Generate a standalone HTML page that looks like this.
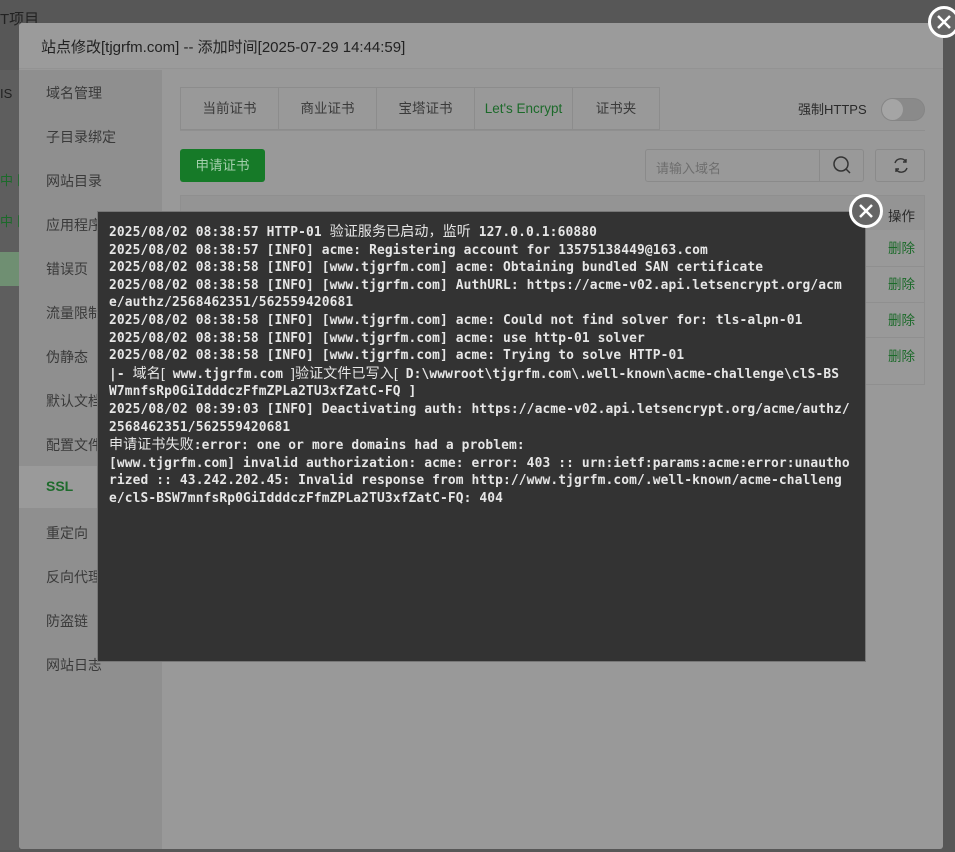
<!DOCTYPE html>
<html><head><meta charset="utf-8"><style>
*{margin:0;padding:0;box-sizing:border-box}
body{width:955px;height:852px;overflow:hidden;background:#575757;font-family:"Liberation Sans","Noto Sans CJK SC",sans-serif;position:relative}
.bgt{position:absolute;left:0;top:8px;font-size:15px;color:#222}
.bgstrip{position:absolute;left:0;top:70px;width:19px;height:780px;background:#5e5e5e}
.bgl{position:absolute;left:0;font-size:13px}
.modal{position:absolute;left:19px;top:23px;width:924px;height:826px;background:#999;border-radius:3px;overflow:hidden}
.head{height:46px;background:#9b9b9b;border-bottom:1px solid #939393;font-size:15px;color:#222;padding:13px 22px}
.side{position:absolute;left:0;top:47px;width:143px;bottom:0;background:#8f8f8f}
.side div{position:absolute;left:27px;font-size:14px;color:#3a3a3a}
.ssl{left:0!important;width:143px;height:42px;background:#9a9a9a;color:#1e6b2c!important;padding:12px 27px;font-weight:bold}
.tabs{position:absolute;left:161px;top:64px;height:43px;border:1px solid #8c8c8c;display:flex;background:#999}
.tabs div{width:98px;text-align:center;line-height:41px;font-size:13.5px;color:#3a3a3a;border-right:1px solid #8c8c8c}
.tabs div:last-child{width:86px;border-right:none}
.btn{position:absolute;left:161px;top:126px;width:85px;height:33px;background:#167a28;border-radius:3px;color:#a5cfad;font-size:13.5px;text-align:center;line-height:33px}
.search{position:absolute;left:626px;top:126px;width:219px;height:33px;border:1px solid #8a8a8a;border-radius:3px;font-size:13px;color:#6e6e6e;padding:8px 10px}
.search i{position:absolute;right:0;top:0;width:44px;height:31px;border-left:1px solid #8a8a8a}
.refresh{position:absolute;left:856px;top:126px;width:50px;height:33px;border:1px solid #8a8a8a;border-radius:3px}
.tbl{position:absolute;left:161px;top:172px;width:745px;height:190px;border:1px solid #8f8f8f;background:#999}
.tbl .th{height:34px;background:#949494}
.op{position:absolute;font-size:13.5px;color:#1c6a2a}
.console{position:absolute;left:97px;top:211px;width:769px;height:451px;background:#333;border:1px solid #777;padding:11px 0 0 11px;font-family:"DejaVu Sans Mono","Noto Sans CJK SC",monospace;font-size:12.9px;letter-spacing:0.12px;font-weight:bold;color:#e6e6e6;white-space:pre;line-height:17.6px}
.console b{font-family:"Liberation Sans","Noto Sans CJK SC",sans-serif;font-weight:normal;font-size:14px}
.x{position:absolute;border-radius:50%;background:#666;border:3px solid #fff}
</style></head><body>
<div class="bgt">T项目</div>
<div class="bgstrip"></div>
<div class="bgl" style="top:86px;color:#222">IS</div>
<div class="bgl" style="top:170px;color:#1c6a2a">中 ▶</div>
<div class="bgl" style="top:211px;color:#1c6a2a">中 ▶</div>
<div style="position:absolute;left:0;top:252px;width:19px;height:34px;background:#6f8f72"></div>
<div class="modal">
<div class="head">站点修改[tjgrfm.com] -- 添加时间[2025-07-29 14:44:59]</div>
<div class="side">
<div style="top:13px">域名管理</div><div style="top:57px">子目录绑定</div><div style="top:101px">网站目录</div><div style="top:145px">应用程序</div><div style="top:189px">错误页</div><div style="top:233px">流量限制</div><div style="top:277px">伪静态</div><div style="top:321px">默认文档</div><div style="top:365px">配置文件</div>
<div class="ssl" style="top:396px">SSL</div>
<div style="top:453px">重定向</div><div style="top:497px">反向代理</div><div style="top:541px">防盗链</div><div style="top:585px">网站日志</div>
</div>
<div class="tabs"><div>当前证书</div><div>商业证书</div><div>宝塔证书</div><div style="color:#1c6a2a">Let's Encrypt</div><div>证书夹</div></div>
<div style="position:absolute;left:779px;top:76px;font-size:13px;color:#2a2a2a">强制HTTPS</div>
<div style="position:absolute;left:862px;top:75px;width:44px;height:23px;border-radius:12px;background:#8a8a8a;border:1px solid #858585"><div style="width:21px;height:21px;border-radius:50%;background:#a5a5a5"></div></div>
<div style="position:absolute;left:161px;top:107px;width:745px;height:1px;background:#8f8f8f"></div>
<div class="btn">申请证书</div>
<div class="search">请输入域名<i><svg width="44" height="31"><circle cx="21" cy="14" r="7" fill="none" stroke="#333" stroke-width="1.5"/><path d="M26 19l4 4" stroke="#333" stroke-width="1.5"/></svg></i></div>
<div class="refresh"><svg width="50" height="31"><path d="M19 13a6 6 0 0 1 11-1M31 18a6 6 0 0 1-11 1" fill="none" stroke="#333" stroke-width="1.4"/><path d="M30 9v3h-3M20 22v-3h3" fill="none" stroke="#333" stroke-width="1.4"/></svg></div>
<div class="tbl"><div class="th"></div></div>
<div class="op" style="left:869px;top:182px;color:#2a2a2a">操作</div>
<div class="op" style="left:869px;top:214px">删除</div><div class="op" style="left:869px;top:250px">删除</div><div class="op" style="left:869px;top:286px">删除</div><div class="op" style="left:869px;top:322px">删除</div>
<div style="position:absolute;left:161px;top:243px;width:745px;height:1px;background:#8f8f8f"></div>
<div style="position:absolute;left:161px;top:279px;width:745px;height:1px;background:#8f8f8f"></div>
<div style="position:absolute;left:161px;top:314px;width:745px;height:1px;background:#8f8f8f"></div>
</div>
<div class="x" style="left:928px;top:6px;width:32px;height:32px"><svg width="26" height="26"><path d="M7 7l12 12M19 7L7 19" stroke="#fff" stroke-width="2.5"/></svg></div>
<div class="console">2025/08/02 08:38:57 HTTP-01 <b>验证服务已启动，监听</b> 127.0.0.1:60880
2025/08/02 08:38:57 [INFO] acme: Registering account for 13575138449@163.com
2025/08/02 08:38:58 [INFO] [www.tjgrfm.com] acme: Obtaining bundled SAN certificate
2025/08/02 08:38:58 [INFO] [www.tjgrfm.com] AuthURL: https://acme-v02.api.letsencrypt.org/acm
e/authz/2568462351/562559420681
2025/08/02 08:38:58 [INFO] [www.tjgrfm.com] acme: Could not find solver for: tls-alpn-01
2025/08/02 08:38:58 [INFO] [www.tjgrfm.com] acme: use http-01 solver
2025/08/02 08:38:58 [INFO] [www.tjgrfm.com] acme: Trying to solve HTTP-01
|- <b>域名[</b> www.tjgrfm.com <b>]验证文件已写入[</b> D:\wwwroot\tjgrfm.com\.well-known\acme-challenge\clS-BS
W7mnfsRp0GiIdddczFfmZPLa2TU3xfZatC-FQ ]
2025/08/02 08:39:03 [INFO] Deactivating auth: https://acme-v02.api.letsencrypt.org/acme/authz/
2568462351/562559420681
<b>申请证书失败</b>:error: one or more domains had a problem:
[www.tjgrfm.com] invalid authorization: acme: error: 403 :: urn:ietf:params:acme:error:unautho
rized :: 43.242.202.45: Invalid response from http://www.tjgrfm.com/.well-known/acme-challeng
e/clS-BSW7mnfsRp0GiIdddczFfmZPLa2TU3xfZatC-FQ: 404</div>
<div class="x" style="left:849px;top:194px;width:34px;height:34px"><svg width="28" height="28"><path d="M8 8l12 12M20 8L8 20" stroke="#fff" stroke-width="2.5"/></svg></div>
</body></html>
